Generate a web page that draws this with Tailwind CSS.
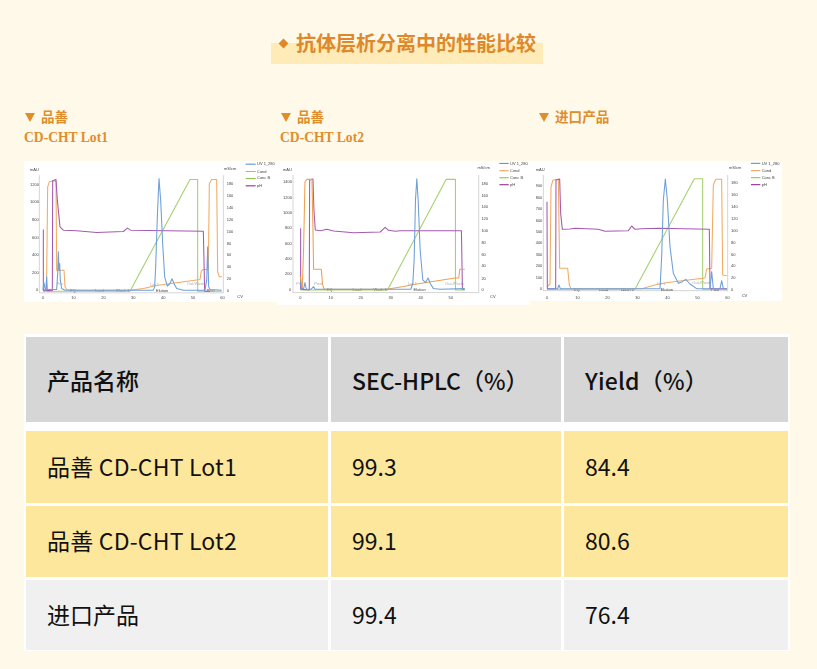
<!DOCTYPE html>
<html lang="zh">
<head>
<meta charset="utf-8">
<script src="https://cdn.jsdelivr.net/npm/@tailwindcss/browser@4"></script>
</head>
<body class="m-0 bg-[#fff9e9]">
<main class="w-[817px] h-[669px] overflow-hidden font-['Noto_Sans_CJK_SC','Noto_Sans',sans-serif]">
  <header class="flex justify-center pt-[27px] ml-[-3px]">
    <h1 class="relative flex w-[272px] h-[37px] items-start justify-end pr-[7px] text-[20px] leading-[32px] font-bold text-[#dd892b]">
      <span class="absolute left-0 right-0 bottom-0 h-[21px] bg-[#ffebb8]"></span>
      <span class="absolute left-[9px] top-[13px] size-[7px] rotate-45 bg-[#dd892b]"></span>
      <span class="relative">抗体层析分离中的性能比较</span>
    </h1>
  </header>

  <section class="flex pl-[24px] mt-[43px] h-[228px] items-start">
    <article class="w-[253px] shrink-0">
      <h2 class="h-[54px] text-[13.6px] leading-[21px] font-bold text-[#e08d2c] font-['Liberation_Serif','Noto_Sans_CJK_SC',serif]"><span class="flex items-center"><svg class="w-[10px] h-[9px] mr-[6px] ml-[1px]" viewBox="0 0 10 9"><path d="M0 0H10L5 9Z" fill="#e08d2c"/></svg>品善</span><span class="block mt-[-1px]">CD-CHT Lot1</span></h2>
      <svg class="block w-[253px] h-[141px] bg-white blur-[0.5px]" viewBox="42 183 759 422" font-family="Liberation Sans" font-size="12" fill="#444">
        <path d="M88 225V578H640M640 225V578" fill="none" stroke="#aaa" stroke-width="1.5"/>
        <g><text x="60" y="214">mAU</text><text x="642" y="209">mS/cm</text><text x="682" y="594">CV</text>
        <text x="60" y="257">1200</text><text x="60" y="310">1000</text><text x="66" y="363">800</text><text x="66" y="416">600</text><text x="66" y="468">400</text><text x="66" y="521">200</text><text x="78" y="574">0</text>
        <text x="96" y="598">0</text><text x="184" y="598">10</text><text x="274" y="598">20</text><text x="363" y="598">30</text><text x="453" y="598">40</text><text x="542" y="598">50</text><text x="631" y="598">60</text>
        <text x="650" y="254">180</text><text x="650" y="290">160</text><text x="650" y="326">140</text><text x="650" y="362">120</text><text x="650" y="398">100</text><text x="650" y="434">80</text><text x="650" y="469">60</text><text x="650" y="505">40</text><text x="650" y="541">20</text><text x="650" y="577">0</text>
        <text x="741" y="196">UV 1_280</text><text x="741" y="218">Cond</text><text x="741" y="238">Conc B</text><text x="741" y="261">pH</text>
        <text x="180" y="576">EQ</text><text x="255" y="576">Load</text><text x="318" y="576">Wash 1</text><text x="438" y="576">Elution</text><text x="103" y="576">Pre</text><text x="140" y="556" fill="#aaa">Pre</text><text x="420" y="558" fill="#aaa">Lot 1</text><text x="530" y="556" fill="#aaa">Out-Waste</text><text x="590" y="576">Post</text></g>
        <g fill="none" stroke-width="3.2" stroke-linejoin="round">
          <path d="M707 192h30" stroke="#5b8fd0"/><path d="M707 214h30" stroke="#f0a050"/><path d="M707 235h30" stroke="#8bc34a"/><path d="M707 257h30" stroke="#8b2a8b"/>
          <polyline stroke="#f2ab62" points="99,570 108,568 110,530 113,260 118,245 135,242 138,245 140,510 162,510 165,560 170,568 200,570 360,570 400,565 440,556 570,538 574,512 580,508 595,508 598,250 605,238 620,238 623,515 628,530 636,530"/>
          <polyline stroke="#a5cf70" points="99,573 360,573 540,238 563,238 563,573 635,573"/>
          <polyline stroke="#a55ab0" points="100,388 100,570 127,572 128,242 138,238 142,300 150,380 160,390 200,392 260,397 340,394 352,384 362,390 580,393 584,573 600,573"/>
          <polyline stroke="#6f9fd8" points="99,570 102,548 105,565 108,570 110,530 112,568 140,568 143,520 145,455 147,510 149,490 151,540 155,565 165,570 430,570 434,560 437,500 442,350 447,235 452,300 458,430 464,530 472,558 480,550 486,536 492,550 500,565 520,570 585,570 590,540 593,440 596,560 600,568 635,570"/>
        </g>
      </svg>
    </article>

    <article class="w-[253px] shrink-0">
      <h2 class="h-[54px] pl-[3px] text-[13.6px] leading-[21px] font-bold text-[#e08d2c] font-['Liberation_Serif','Noto_Sans_CJK_SC',serif]"><span class="flex items-center"><svg class="w-[10px] h-[9px] mr-[6px] ml-[1px]" viewBox="0 0 10 9"><path d="M0 0H10L5 9Z" fill="#e08d2c"/></svg>品善</span><span class="block mt-[-1px]">CD-CHT Lot2</span></h2>
      <svg class="block w-[253px] h-[144px] bg-white blur-[0.5px]" viewBox="20 183 760 432" font-family="Liberation Sans" font-size="12" fill="#444">
        <path d="M68 225V578H626M626 225V578" fill="none" stroke="#aaa" stroke-width="1.5"/>
        <g><text x="38" y="212">mAU</text><text x="622" y="207">mS/cm</text><text x="660" y="594">CV</text>
        <text x="38" y="250">1400</text><text x="38" y="296">1200</text><text x="38" y="342">1000</text><text x="44" y="388">800</text><text x="44" y="434">600</text><text x="44" y="480">400</text><text x="44" y="526">200</text><text x="56" y="572">0</text>
        <text x="87" y="596">0</text><text x="175" y="596">10</text><text x="265" y="596">20</text><text x="355" y="596">30</text><text x="445" y="596">40</text><text x="535" y="596">50</text>
        <text x="634" y="255">180</text><text x="634" y="290">160</text><text x="634" y="325">140</text><text x="634" y="360">120</text><text x="634" y="396">100</text><text x="634" y="432">80</text><text x="634" y="467">60</text><text x="634" y="502">40</text><text x="634" y="539">20</text><text x="634" y="574">0</text>
        <text x="720" y="194">UV 1_280</text><text x="720" y="216">Cond</text><text x="720" y="237">Conc B</text><text x="720" y="258">pH</text>
        <text x="170" y="574">EQ</text><text x="247" y="574">Load</text><text x="310" y="574">Wash 1</text><text x="430" y="574">Elution</text><text x="78" y="554" fill="#aaa">Pre</text><text x="132" y="554" fill="#aaa">Post</text><text x="414" y="554" fill="#aaa">Lot 1</text><text x="525" y="554" fill="#aaa">Out-Waste</text></g>
        <g fill="none" stroke-width="3.2" stroke-linejoin="round">
          <path d="M688 190h28" stroke="#5b8fd0"/><path d="M688 212h28" stroke="#f0a050"/><path d="M688 233h28" stroke="#8bc34a"/><path d="M688 254h28" stroke="#8b2a8b"/>
          <polyline stroke="#a5cf70" points="90,570 352,570 528,238 556,238 556,570 584,570"/>
          <polyline stroke="#a55ab0" points="91,385 91,568 117,570 118,240 128,237 131,330 135,390 150,392 170,388 190,393 250,398 330,396 345,382 355,391 375,394 390,392 574,392 577,568 584,568"/>
          <polyline stroke="#f0a050" points="90,530 96,565 100,440 104,245 110,238 125,238 128,390 130,508 153,508 157,555 162,568 200,568 350,568 400,560 440,552 555,534 566,534 569,508 584,508"/>
          <polyline stroke="#6f9fd8" points="90,545 94,566 100,566 104,548 108,568 122,568 130,560 134,568 422,568 428,550 432,480 436,300 440,236 444,300 450,450 458,540 466,548 474,534 480,550 490,566 510,568 584,566"/>
        </g>
      </svg>
    </article>

    <article class="w-[252px] shrink-0">
      <h2 class="h-[54px] pl-[8px] text-[13.6px] leading-[21px] font-bold text-[#e08d2c] font-['Liberation_Serif','Noto_Sans_CJK_SC',serif]"><span class="flex items-center"><svg class="w-[10px] h-[9px] mr-[6px] ml-[1px]" viewBox="0 0 10 9"><path d="M0 0H10L5 9Z" fill="#e08d2c"/></svg>进口产品</span></h2>
      <svg class="block w-[252px] h-[140px] bg-white blur-[0.5px]" viewBox="15 183 756 420" font-family="Liberation Sans" font-size="12" fill="#444">
        <path d="M55 225V572H608M608 225V572" fill="none" stroke="#aaa" stroke-width="1.5"/>
        <g><text x="32" y="212">mAU</text><text x="612" y="207">mS/cm</text><text x="650" y="592">CV</text>
        <text x="32" y="260">900</text><text x="32" y="296">800</text><text x="32" y="329">700</text><text x="32" y="365">600</text><text x="32" y="399">500</text><text x="32" y="433">400</text><text x="32" y="467">300</text><text x="32" y="501">200</text><text x="32" y="536">100</text><text x="44" y="570">0</text>
        <text x="63" y="596">0</text><text x="151" y="596">10</text><text x="241" y="596">20</text><text x="331" y="596">30</text><text x="421" y="596">40</text><text x="511" y="596">50</text><text x="601" y="596">60</text>
        <text x="618" y="252">180</text><text x="618" y="288">160</text><text x="618" y="324">140</text><text x="618" y="360">120</text><text x="618" y="396">100</text><text x="618" y="431">80</text><text x="618" y="467">60</text><text x="618" y="502">40</text><text x="618" y="538">20</text><text x="618" y="574">0</text>
        <text x="710" y="194">UV 1_280</text><text x="710" y="216">Cond</text><text x="710" y="237">Conc B</text><text x="710" y="258">pH</text>
        <text x="147" y="572">EQ</text><text x="222" y="572">Load</text><text x="287" y="572">Wash 1</text><text x="407" y="572">Elution</text><text x="395" y="554" fill="#aaa">Lot 1</text><text x="502" y="553" fill="#aaa">Out-Waste</text><text x="558" y="572">Post</text></g>
        <g fill="none" stroke-width="3.2" stroke-linejoin="round">
          <path d="M678 190h28" stroke="#5b8fd0"/><path d="M678 212h28" stroke="#f0a050"/><path d="M678 233h28" stroke="#8bc34a"/><path d="M678 254h28" stroke="#8b2a8b"/>
          <polyline stroke="#a5cf70" points="66,568 330,568 508,236 533,236 533,568 606,568"/>
          <polyline stroke="#f2ab62" points="66,560 75,552 78,260 84,240 100,238 104,505 128,505 133,555 138,566 200,567 350,566 400,552 440,546 540,534 545,507 560,505 565,255 572,238 590,238 593,525 605,527"/>
          <polyline stroke="#a55ab0" points="66,305 67,566 92,566 93,240 104,237 107,340 112,388 135,387 150,385 220,388 240,394 310,392 320,378 330,388 350,386 400,385 553,388 555,566 606,566"/>
          <polyline stroke="#6f9fd8" points="66,566 98,566 102,555 106,566 405,566 410,470 415,300 421,237 427,300 435,440 445,520 460,550 472,545 482,538 495,552 515,566 555,566 560,515 565,566 585,566 590,542 595,566 606,566"/>
        </g>
      </svg>
    </article>
  </section>

  <section class="mx-[24px] mt-[-1px] w-[766px] bg-white pt-[3px] px-[2px] pb-[1px] flex flex-col gap-[3px] text-[23px] text-[#111]">
    <div class="grid grid-cols-[302px_230px_224px] gap-[3px] h-[85px] mb-[6px] font-medium">
      <div class="bg-[#d6d6d6] flex items-center pl-[21px] pt-[2px]">产品名称</div>
      <div class="bg-[#d6d6d6] flex items-center pl-[21px] pt-[2px]">SEC-HPLC（%）</div>
      <div class="bg-[#d6d6d6] flex items-center pl-[21px] pt-[2px] tracking-[0.2px]">Yield（%）</div>
    </div>
    <div class="grid grid-cols-[302px_230px_224px] gap-[3px] h-[72px]">
      <div class="bg-[#fde79c] flex items-center pl-[21px] pb-[2px] tracking-[0.2px]">品善 CD-CHT Lot1</div>
      <div class="bg-[#fde79c] flex items-center pl-[21px] pb-[2px]">99.3</div>
      <div class="bg-[#fde79c] flex items-center pl-[21px] pb-[2px]">84.4</div>
    </div>
    <div class="grid grid-cols-[302px_230px_224px] gap-[3px] h-[71px]">
      <div class="bg-[#fde79c] flex items-center pl-[21px] pb-[2px] tracking-[0.2px]">品善 CD-CHT Lot2</div>
      <div class="bg-[#fde79c] flex items-center pl-[21px] pb-[2px]">99.1</div>
      <div class="bg-[#fde79c] flex items-center pl-[21px] pb-[2px]">80.6</div>
    </div>
    <div class="grid grid-cols-[302px_230px_224px] gap-[3px] h-[70px]">
      <div class="bg-[#f0f0f0] flex items-center pl-[21px] pb-[2px]">进口产品</div>
      <div class="bg-[#f0f0f0] flex items-center pl-[21px] pb-[2px]">99.4</div>
      <div class="bg-[#f0f0f0] flex items-center pl-[21px] pb-[2px]">76.4</div>
    </div>
  </section>
</main>
</body>
</html>
